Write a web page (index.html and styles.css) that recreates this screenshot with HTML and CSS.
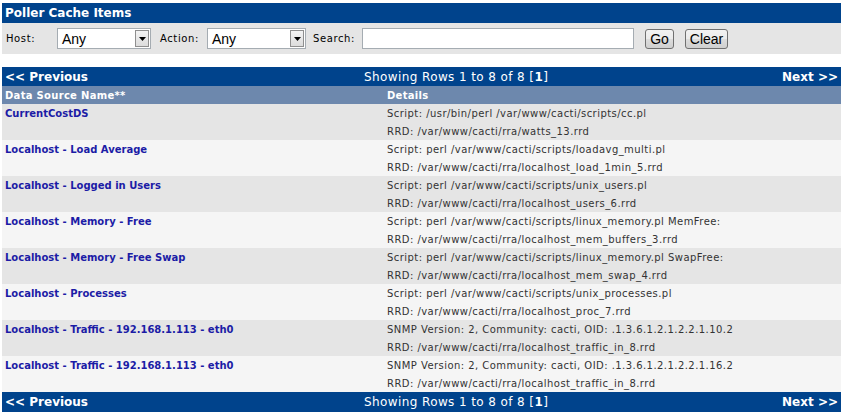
FILE: index.html
```html
<!DOCTYPE html>
<html>
<head>
<meta charset="utf-8">
<link rel="stylesheet" href="styles.css">
</head>
<body>
<div class="page">
  <div class="titlebar">Poller Cache Items</div>
  <div class="filter">
    <span class="lbl lbl-host">Host:</span>
    <div class="select sel-host"><span class="sel-val">Any</span><span class="sel-btn"><svg width="7" height="4" viewBox="0 0 7 4"><path d="M0 0h7L3.5 4z" fill="#000"/></svg></span></div>
    <span class="lbl lbl-action">Action:</span>
    <div class="select sel-action"><span class="sel-val">Any</span><span class="sel-btn"><svg width="7" height="4" viewBox="0 0 7 4"><path d="M0 0h7L3.5 4z" fill="#000"/></svg></span></div>
    <span class="lbl lbl-search">Search:</span>
    <div class="input"></div>
    <span class="btn btn-go">Go</span>
    <span class="btn btn-clear">Clear</span>
  </div>

  <div class="nav nav-top">
    <span class="nav-prev">&lt;&lt; Previous</span>
    <span class="nav-mid">Showing Rows 1 to 8 of 8 [<b>1</b>]</span>
    <span class="nav-next">Next &gt;&gt;</span>
  </div>

  <table class="grid">
    <colgroup><col class="c1"><col class="c2"></colgroup>
    <tr class="head"><th>Data Source Name**</th><th>Details</th></tr>

    <tr class="odd"><td class="name">CurrentCostDS</td><td>Script: /usr/bin/perl /var/www/cacti/scripts/cc.pl</td></tr>
    <tr class="odd"><td></td><td>RRD: /var/www/cacti/rra/watts_13.rrd</td></tr>

    <tr class="even"><td class="name">Localhost - Load Average</td><td>Script: perl /var/www/cacti/scripts/loadavg_multi.pl</td></tr>
    <tr class="even"><td></td><td>RRD: /var/www/cacti/rra/localhost_load_1min_5.rrd</td></tr>

    <tr class="odd"><td class="name">Localhost - Logged in Users</td><td>Script: perl /var/www/cacti/scripts/unix_users.pl</td></tr>
    <tr class="odd"><td></td><td>RRD: /var/www/cacti/rra/localhost_users_6.rrd</td></tr>

    <tr class="even"><td class="name">Localhost - Memory - Free</td><td>Script: perl /var/www/cacti/scripts/linux_memory.pl MemFree:</td></tr>
    <tr class="even"><td></td><td>RRD: /var/www/cacti/rra/localhost_mem_buffers_3.rrd</td></tr>

    <tr class="odd"><td class="name">Localhost - Memory - Free Swap</td><td>Script: perl /var/www/cacti/scripts/linux_memory.pl SwapFree:</td></tr>
    <tr class="odd"><td></td><td>RRD: /var/www/cacti/rra/localhost_mem_swap_4.rrd</td></tr>

    <tr class="even"><td class="name">Localhost - Processes</td><td>Script: perl /var/www/cacti/scripts/unix_processes.pl</td></tr>
    <tr class="even"><td></td><td>RRD: /var/www/cacti/rra/localhost_proc_7.rrd</td></tr>

    <tr class="odd"><td class="name">Localhost - Traffic - 192.168.1.113 - eth0</td><td>SNMP Version: 2, Community: cacti, OID: .1.3.6.1.2.1.2.2.1.10.2</td></tr>
    <tr class="odd"><td></td><td>RRD: /var/www/cacti/rra/localhost_traffic_in_8.rrd</td></tr>

    <tr class="even"><td class="name">Localhost - Traffic - 192.168.1.113 - eth0</td><td>SNMP Version: 2, Community: cacti, OID: .1.3.6.1.2.1.2.2.1.16.2</td></tr>
    <tr class="even"><td></td><td>RRD: /var/www/cacti/rra/localhost_traffic_in_8.rrd</td></tr>
  </table>

  <div class="nav nav-bottom">
    <span class="nav-prev">&lt;&lt; Previous</span>
    <span class="nav-mid">Showing Rows 1 to 8 of 8 [<b>1</b>]</span>
    <span class="nav-next">Next &gt;&gt;</span>
  </div>
</div>
</body>
</html>
```

FILE: styles.css
```css
html, body {
  margin: 0;
  padding: 0;
  background: #ffffff;
}
body {
  font-family: "DejaVu Sans", Verdana, sans-serif;
  font-size: 10px;
  color: #333333;
}
.page {
  padding: 3px 2px 0 2px;
}
.titlebar {
  background: #00438c;
  color: #ffffff;
  font-weight: bold;
  font-size: 12px;
  height: 20px;
  line-height: 20px;
  padding-left: 3px;
}
.filter {
  background: #e5e5e5;
  height: 31px;
  display: flex;
  align-items: center;
  padding-left: 4px;
  color: #000;
}
.lbl {
  font-size: 10px;
  letter-spacing: 0.6px;
}
.lbl-host { width: 51px; }
.lbl-action { width: 47px; margin-left: 9px; }
.lbl-search { width: 49px; margin-left: 7px; }
.select {
  height: 21px;
  box-sizing: border-box;
  border: 1px solid #a5acb2;
  background: #fff;
  display: flex;
  align-items: center;
  justify-content: space-between;
  font-family: "Liberation Sans", Arial, sans-serif;
  font-size: 14px;
  color: #000;
}
.sel-host { width: 94px; }
.sel-action { width: 99px; }
.sel-val { padding-left: 4px; }
.sel-btn {
  width: 14px;
  height: 17px;
  margin-right: 1px;
  box-sizing: border-box;
  border: 1px solid #8f8f8f;
  background: linear-gradient(#f4f4f4, #dcdcdc);
  display: flex;
  align-items: center;
  justify-content: center;
}
.input {
  width: 272px;
  height: 21px;
  box-sizing: border-box;
  border: 1px solid #a5acb2;
  background: #fff;
}
.btn {
  height: 20px;
  box-sizing: border-box;
  border: 1px solid #707070;
  border-radius: 3px;
  background: linear-gradient(#f2f2f2 0%, #ebebeb 50%, #dddddd 51%, #cfcfcf 100%);
  font-family: "Liberation Sans", Arial, sans-serif;
  font-size: 14px;
  color: #000;
  display: flex;
  align-items: center;
  justify-content: center;
}
.btn-go { width: 29px; margin-left: 11px; }
.btn-clear { width: 43px; margin-left: 11px; }

.nav {
  background: #00438c;
  color: #ffffff;
  height: 19px;
  display: grid;
  grid-template-columns: 362px 1fr auto;
  align-items: center;
  font-size: 12px;
}
.nav-top { margin-top: 13px; }
.nav-bottom { height: 20px; }
.nav-prev, .nav-next { font-weight: bold; }
.nav-prev { padding-left: 3px; }
.nav-next { padding-right: 3px; }
.nav-mid { font-size: 12px; letter-spacing: 0.4px; }

.grid {
  width: 100%;
  border-collapse: collapse;
  border-spacing: 0;
}
.c1 { width: 382px; }
.grid th {
  background: #6d88ad;
  color: #ffffff;
  font-weight: bold;
  text-align: left;
  height: 18px;
  padding: 0 3px;
  font-size: 10px;
  letter-spacing: 0.3px;
}
.grid td {
  height: 18px;
  padding: 0 3px;
  white-space: nowrap;
  letter-spacing: 0.45px;
}
.grid .name {
  color: #1c1ca6;
  font-weight: bold;
  letter-spacing: 0;
}
.odd td { background: #e5e5e5; }
.even td { background: #f5f5f5; }
```
